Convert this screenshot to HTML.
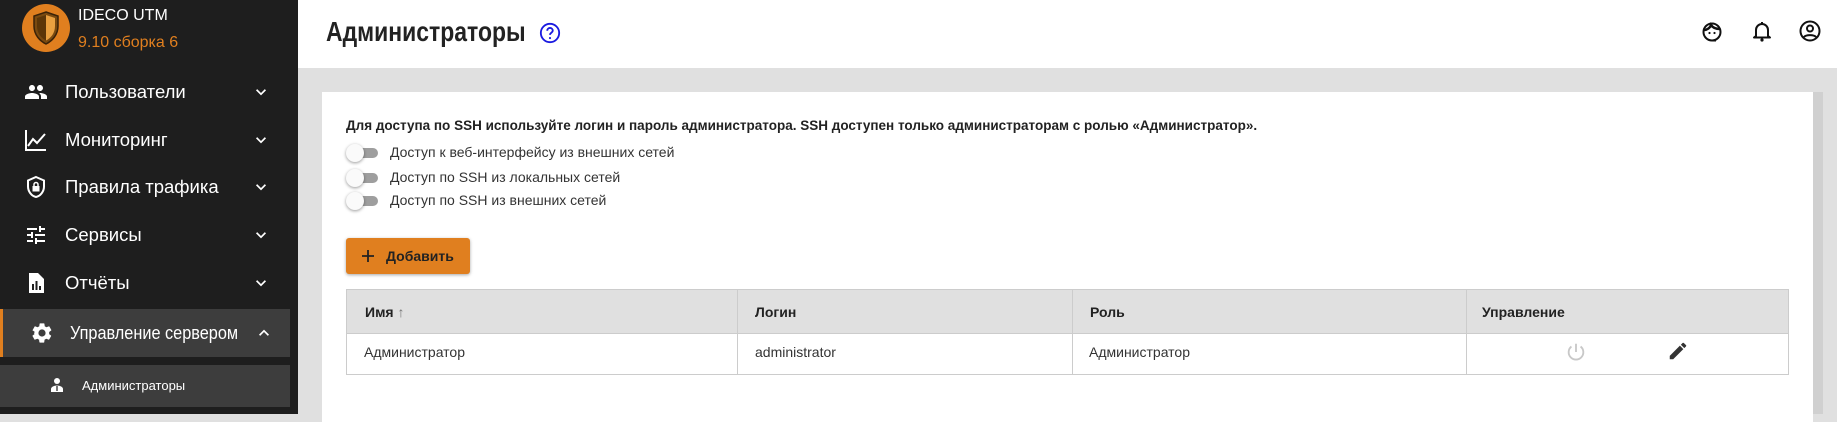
<!DOCTYPE html>
<html><head><meta charset="utf-8"><style>
*{box-sizing:border-box;margin:0;padding:0}
body{width:1837px;height:414px;overflow:hidden;background:#e0e0e0;font-family:"Liberation Sans",sans-serif;position:relative}
.sb{position:absolute;left:0;top:0;width:298px;height:414px;background:#1e1e1e;color:#fff}
.abs{position:absolute}
.mi{position:absolute;left:0;width:290px;height:46px;display:flex;align-items:center;font-size:18.5px}
.mi .ic{position:absolute;left:24px;top:11px;width:24px;height:24px}
.mi .t{position:absolute;left:65px;white-space:nowrap}
.mi .ch{position:absolute;left:251px;top:13px}
.hdr{position:absolute;left:298px;top:0;width:1539px;height:68px;background:#fff}
.card{position:absolute;left:322px;top:92px;width:1491px;height:330px;background:#fff}
.tg{position:absolute;left:346px;width:32px;height:14px}
.tg .tr{position:absolute;left:4px;top:2px;width:28px;height:10px;border-radius:5px;background:#9e9e9e}
.tg .kn{position:absolute;left:0;top:-2px;width:18px;height:18px;border-radius:50%;background:#fafafa;box-shadow:0 1px 3px rgba(0,0,0,.4)}
.tl{position:absolute;left:390px;font-size:14px;color:#333}
.tbl{position:absolute;left:346px;top:289px;width:1443px;height:86px;border:1px solid #ccc;background:#fff}
.th{position:absolute;top:0;height:44px;background:#e0e0e0;font-weight:bold;font-size:14px;color:#222;line-height:44px}
.td{position:absolute;font-size:14px;color:#333;top:62px;transform:translateY(-50%)}
.vl{position:absolute;top:0;width:1px;height:84px;background:#ccc}
</style></head><body>
<div class="sb">
  <svg class="abs" style="left:22px;top:4px" width="48" height="48" viewBox="0 0 48 48"><circle cx="24" cy="24" r="24" fill="#e07f1f"/><path d="M24 8l12 4v10c0 9-6 15-12 18-6-3-12-9-12-18V12z" fill="#7a4a10" stroke="#3a2208" stroke-width="1.5"/><path d="M24 11l9 3v8c0 7-4 12-9 14.5z" fill="#e9a040"/><path d="M24 11v25.5c-5-2.5-9-7.5-9-14.5v-8z" fill="#5c3608"/></svg>
  <div class="abs" style="left:78px;top:7px;font-size:16px;color:#fff">IDECO UTM</div>
  <div class="abs" style="left:78px;top:34px;font-size:16px;color:#e07f1f">9.10 сборка 6</div>

  <div class="mi" style="top:69px"><svg class="ic" viewBox="0 0 24 24"><path fill="#fff" d="M16 11c1.66 0 2.99-1.34 2.99-3S17.66 5 16 5s-3 1.34-3 3 1.34 3 3 3zm-8 0c1.66 0 2.99-1.34 2.99-3S9.66 5 8 5 5 6.34 5 8s1.34 3 3 3zm0 2c-2.33 0-7 1.17-7 3.5V19h14v-2.5c0-2.33-4.67-3.5-7-3.5zm8 0c-.29 0-.62.02-.97.05 1.16.84 1.97 1.97 1.97 3.45V19h6v-2.5c0-2.33-4.67-3.5-7-3.5z"/></svg><span class="t">Пользователи</span><svg class="ch" width="20" height="20" viewBox="0 0 24 24"><path d="M7.4 8.6L12 13.2l4.6-4.6L18 10l-6 6-6-6z" fill="#fff"/></svg></div>
  <div class="mi" style="top:117px"><svg class="ic" viewBox="0 0 24 24"><path fill="none" stroke="#fff" stroke-width="2" d="M2 2v20h20M4 18l5-7 4 4 8-9"/></svg><span class="t">Мониторинг</span><svg class="ch" width="20" height="20" viewBox="0 0 24 24"><path d="M7.4 8.6L12 13.2l4.6-4.6L18 10l-6 6-6-6z" fill="#fff"/></svg></div>
  <div class="mi" style="top:164px"><svg class="ic" viewBox="0 0 24 24"><path fill="none" stroke="#fff" stroke-width="2" d="M12 2l8 3.5v6c0 5-3.5 9.5-8 10.5-4.5-1-8-5.5-8-10.5v-6z"/><rect x="8.5" y="11" width="7" height="5.5" fill="#fff"/><path d="M10 11V9.5a2 2 0 014 0V11" fill="none" stroke="#fff" stroke-width="1.5"/></svg><span class="t">Правила трафика</span><svg class="ch" width="20" height="20" viewBox="0 0 24 24"><path d="M7.4 8.6L12 13.2l4.6-4.6L18 10l-6 6-6-6z" fill="#fff"/></svg></div>
  <div class="mi" style="top:212px"><svg class="ic" viewBox="0 0 24 24"><path fill="#fff" d="M3 17v2h6v-2H3zM3 5v2h10V5H3zm10 16v-2h8v-2h-8v-2h-2v6h2zM7 9v2H3v2h4v2h2V9H7zm14 4v-2H11v2h10zm-6-4h2V7h4V5h-4V3h-2v6z"/></svg><span class="t">Сервисы</span><svg class="ch" width="20" height="20" viewBox="0 0 24 24"><path d="M7.4 8.6L12 13.2l4.6-4.6L18 10l-6 6-6-6z" fill="#fff"/></svg></div>
  <div class="mi" style="top:260px"><svg class="ic" viewBox="0 0 24 24"><path fill="#fff" d="M5 2h9l6 6v14H5z"/><path fill="#1e1e1e" d="M8 13h2v6H8zm3.5-3h2v9h-2zm3.5 5h2v4h-2z"/></svg><span class="t">Отчёты</span><svg class="ch" width="20" height="20" viewBox="0 0 24 24"><path d="M7.4 8.6L12 13.2l4.6-4.6L18 10l-6 6-6-6z" fill="#fff"/></svg></div>
  <div class="mi" style="top:309px;height:48px;background:#3d3d3d;border-left:3px solid #e07f1f"><svg class="ic" style="left:27px;top:12px" viewBox="0 0 24 24"><path fill="#fff" d="M19.14 12.94c.04-.3.06-.61.06-.94 0-.32-.02-.64-.07-.94l2.03-1.58a.49.49 0 00.12-.61l-1.92-3.32a.49.49 0 00-.59-.22l-2.39.96c-.5-.38-1.03-.7-1.62-.94l-.36-2.54a.48.48 0 00-.48-.41h-3.84c-.24 0-.43.17-.47.41l-.36 2.54c-.59.24-1.13.57-1.62.94l-2.39-.96a.48.48 0 00-.59.22L2.74 8.87c-.12.21-.8.47.12.61l2.03 1.58c-.05.3-.9.63-.9.94s.2.64.7.94l-2.03 1.58a.49.49 0 00-.12.61l1.92 3.32c.12.22.37.29.59.22l2.39-.96c.5.38 1.03.7 1.62.94l.36 2.54c.5.24.24.41.48.41h3.84c.24 0 .44-.17.47-.41l.36-2.54c.59-.24 1.13-.56 1.62-.94l2.39.96c.22.08.47 0 .59-.22l1.92-3.32c.12-.22.07-.47-.12-.61l-2.01-1.58zM12 15.6A3.6 3.6 0 1112 8.4a3.6 3.6 0 010 7.2z"/></svg><span class="t" style="left:67px;transform:scaleX(.88);transform-origin:left">Управление сервером</span><svg class="ch" width="20" height="20" viewBox="0 0 24 24" style="left:251px;top:14px"><path d="M7.4 15.4L12 10.8l4.6 4.6L18 14l-6-6-6 6z" fill="#fff"/></svg></div>
  <div class="abs" style="left:0;top:365px;width:290px;height:42px;background:#3d3d3d"></div>
  <svg class="abs" style="left:49px;top:377px" width="16" height="16" viewBox="0 0 16 16"><circle cx="8" cy="4" r="3" fill="#fff"/><path d="M2 15v-3c0-2 3-3.5 6-3.5s6 1.5 6 3.5v3z" fill="#fff"/><path d="M7.3 9h1.4v5H7.3z" fill="#3d3d3d"/></svg>
  <div class="abs" style="left:82px;top:378px;font-size:13px;color:#fff">Администраторы</div>
</div>
<div class="hdr">
  <div class="abs" style="left:28px;top:16px;font-size:28px;font-weight:bold;color:#222;transform:scaleX(.82);transform-origin:left;white-space:nowrap">Администраторы</div>
  <svg class="abs" style="left:241px;top:22px" width="22" height="22" viewBox="0 0 24 24"><circle cx="12" cy="12" r="10" fill="none" stroke="#1a1ae0" stroke-width="2"/><path d="M9 9.5a3 3 0 116 0c0 2-3 2.2-3 4.5" fill="none" stroke="#1a1ae0" stroke-width="2"/><circle cx="12" cy="17.5" r="1.2" fill="#1a1ae0"/></svg>
  <svg class="abs" style="left:1402px;top:20px" width="24" height="24" viewBox="0 0 24 24"><circle cx="12" cy="12" r="8.5" fill="none" stroke="#111" stroke-width="2"/><path d="M4 10c3 0 6-2 7-5 2 3 5 4 9 4" fill="none" stroke="#111" stroke-width="2.5"/><circle cx="9.5" cy="13" r="1.1" fill="#111"/><circle cx="14.5" cy="13" r="1.1" fill="#111"/><path d="M12 20.5h4" stroke="#111" stroke-width="2"/></svg>
  <svg class="abs" style="left:1452px;top:19px" width="24" height="24" viewBox="0 0 24 24"><path d="M6 17V11a6 6 0 0112 0v6l2 1.5H4z" fill="none" stroke="#111" stroke-width="2" stroke-linejoin="round"/><circle cx="12" cy="21" r="1.6" fill="#111"/><path d="M12 3v2" stroke="#111" stroke-width="2"/></svg>
  <svg class="abs" style="left:1500px;top:19px" width="24" height="24" viewBox="0 0 24 24"><circle cx="12" cy="12" r="9.5" fill="none" stroke="#111" stroke-width="2"/><circle cx="12" cy="9.5" r="3" fill="none" stroke="#111" stroke-width="2"/><path d="M6 18c2-2.5 10-2.5 12 0" fill="none" stroke="#111" stroke-width="2"/></svg>
</div>
<div class="abs" style="left:1813px;top:92px;width:10px;height:322px;background:#d0d0d0"></div>
<div class="card"></div>
<div class="abs" style="left:346px;top:117px;font-size:14px;font-weight:bold;color:#222;transform:scaleX(.965);transform-origin:left;white-space:nowrap">Для доступа по SSH используйте логин и пароль администратора. SSH доступен только администраторам с ролью «Администратор».</div>
<div class="tg" style="top:146px"><div class="tr"></div><div class="kn"></div></div><div class="tl" style="top:144px">Доступ к веб-интерфейсу из внешних сетей</div>
<div class="tg" style="top:171px"><div class="tr"></div><div class="kn"></div></div><div class="tl" style="top:169px">Доступ по SSH из локальных сетей</div>
<div class="tg" style="top:194px"><div class="tr"></div><div class="kn"></div></div><div class="tl" style="top:192px">Доступ по SSH из внешних сетей</div>
<div class="abs" style="left:346px;top:238px;width:124px;height:36px;background:#e07f1f;border-radius:3px;box-shadow:0 1px 3px rgba(0,0,0,.35);font-size:14px;font-weight:bold;color:#222;line-height:36px;padding-left:40px">Добавить</div>
<svg class="abs" style="left:360px;top:248px" width="16" height="16" viewBox="0 0 16 16"><path d="M8 2v12M2 8h12" stroke="#222" stroke-width="1.8"/></svg>
<div class="tbl">
  <div class="th" style="left:0;width:1441px;padding-left:18px">Имя <span style="font-weight:normal;color:#777">↑</span></div>
  <div class="th" style="left:408px;background:none">Логин</div>
  <div class="th" style="left:743px;background:none">Роль</div>
  <div class="th" style="left:1135px;background:none">Управление</div>
  <div class="abs" style="left:0;top:43px;width:1441px;height:1px;background:#ccc"></div>
  <div class="vl" style="left:390px"></div><div class="vl" style="left:725px"></div><div class="vl" style="left:1119px"></div>
  <div class="td" style="left:17px">Администратор</div>
  <div class="td" style="left:408px">administrator</div>
  <div class="td" style="left:742px">Администратор</div>
  <svg class="abs" style="left:1218px;top:51px" width="22" height="22" viewBox="0 0 24 24"><path d="M12 3v9" stroke="#c8c8c8" stroke-width="2"/><path d="M7 6a8 8 0 1010 0" fill="none" stroke="#c8c8c8" stroke-width="2"/></svg>
  <svg class="abs" style="left:1320px;top:50px" width="22" height="22" viewBox="0 0 24 24"><path fill="#333" d="M3 17.25V21h3.75L17.81 9.94l-3.75-3.75L3 17.25zM20.71 7.04a1 1 0 000-1.41l-2.34-2.34a1 1 0 00-1.41 0l-1.83 1.83 3.75 3.75 1.83-1.83z"/></svg>
</div>
</body></html>
